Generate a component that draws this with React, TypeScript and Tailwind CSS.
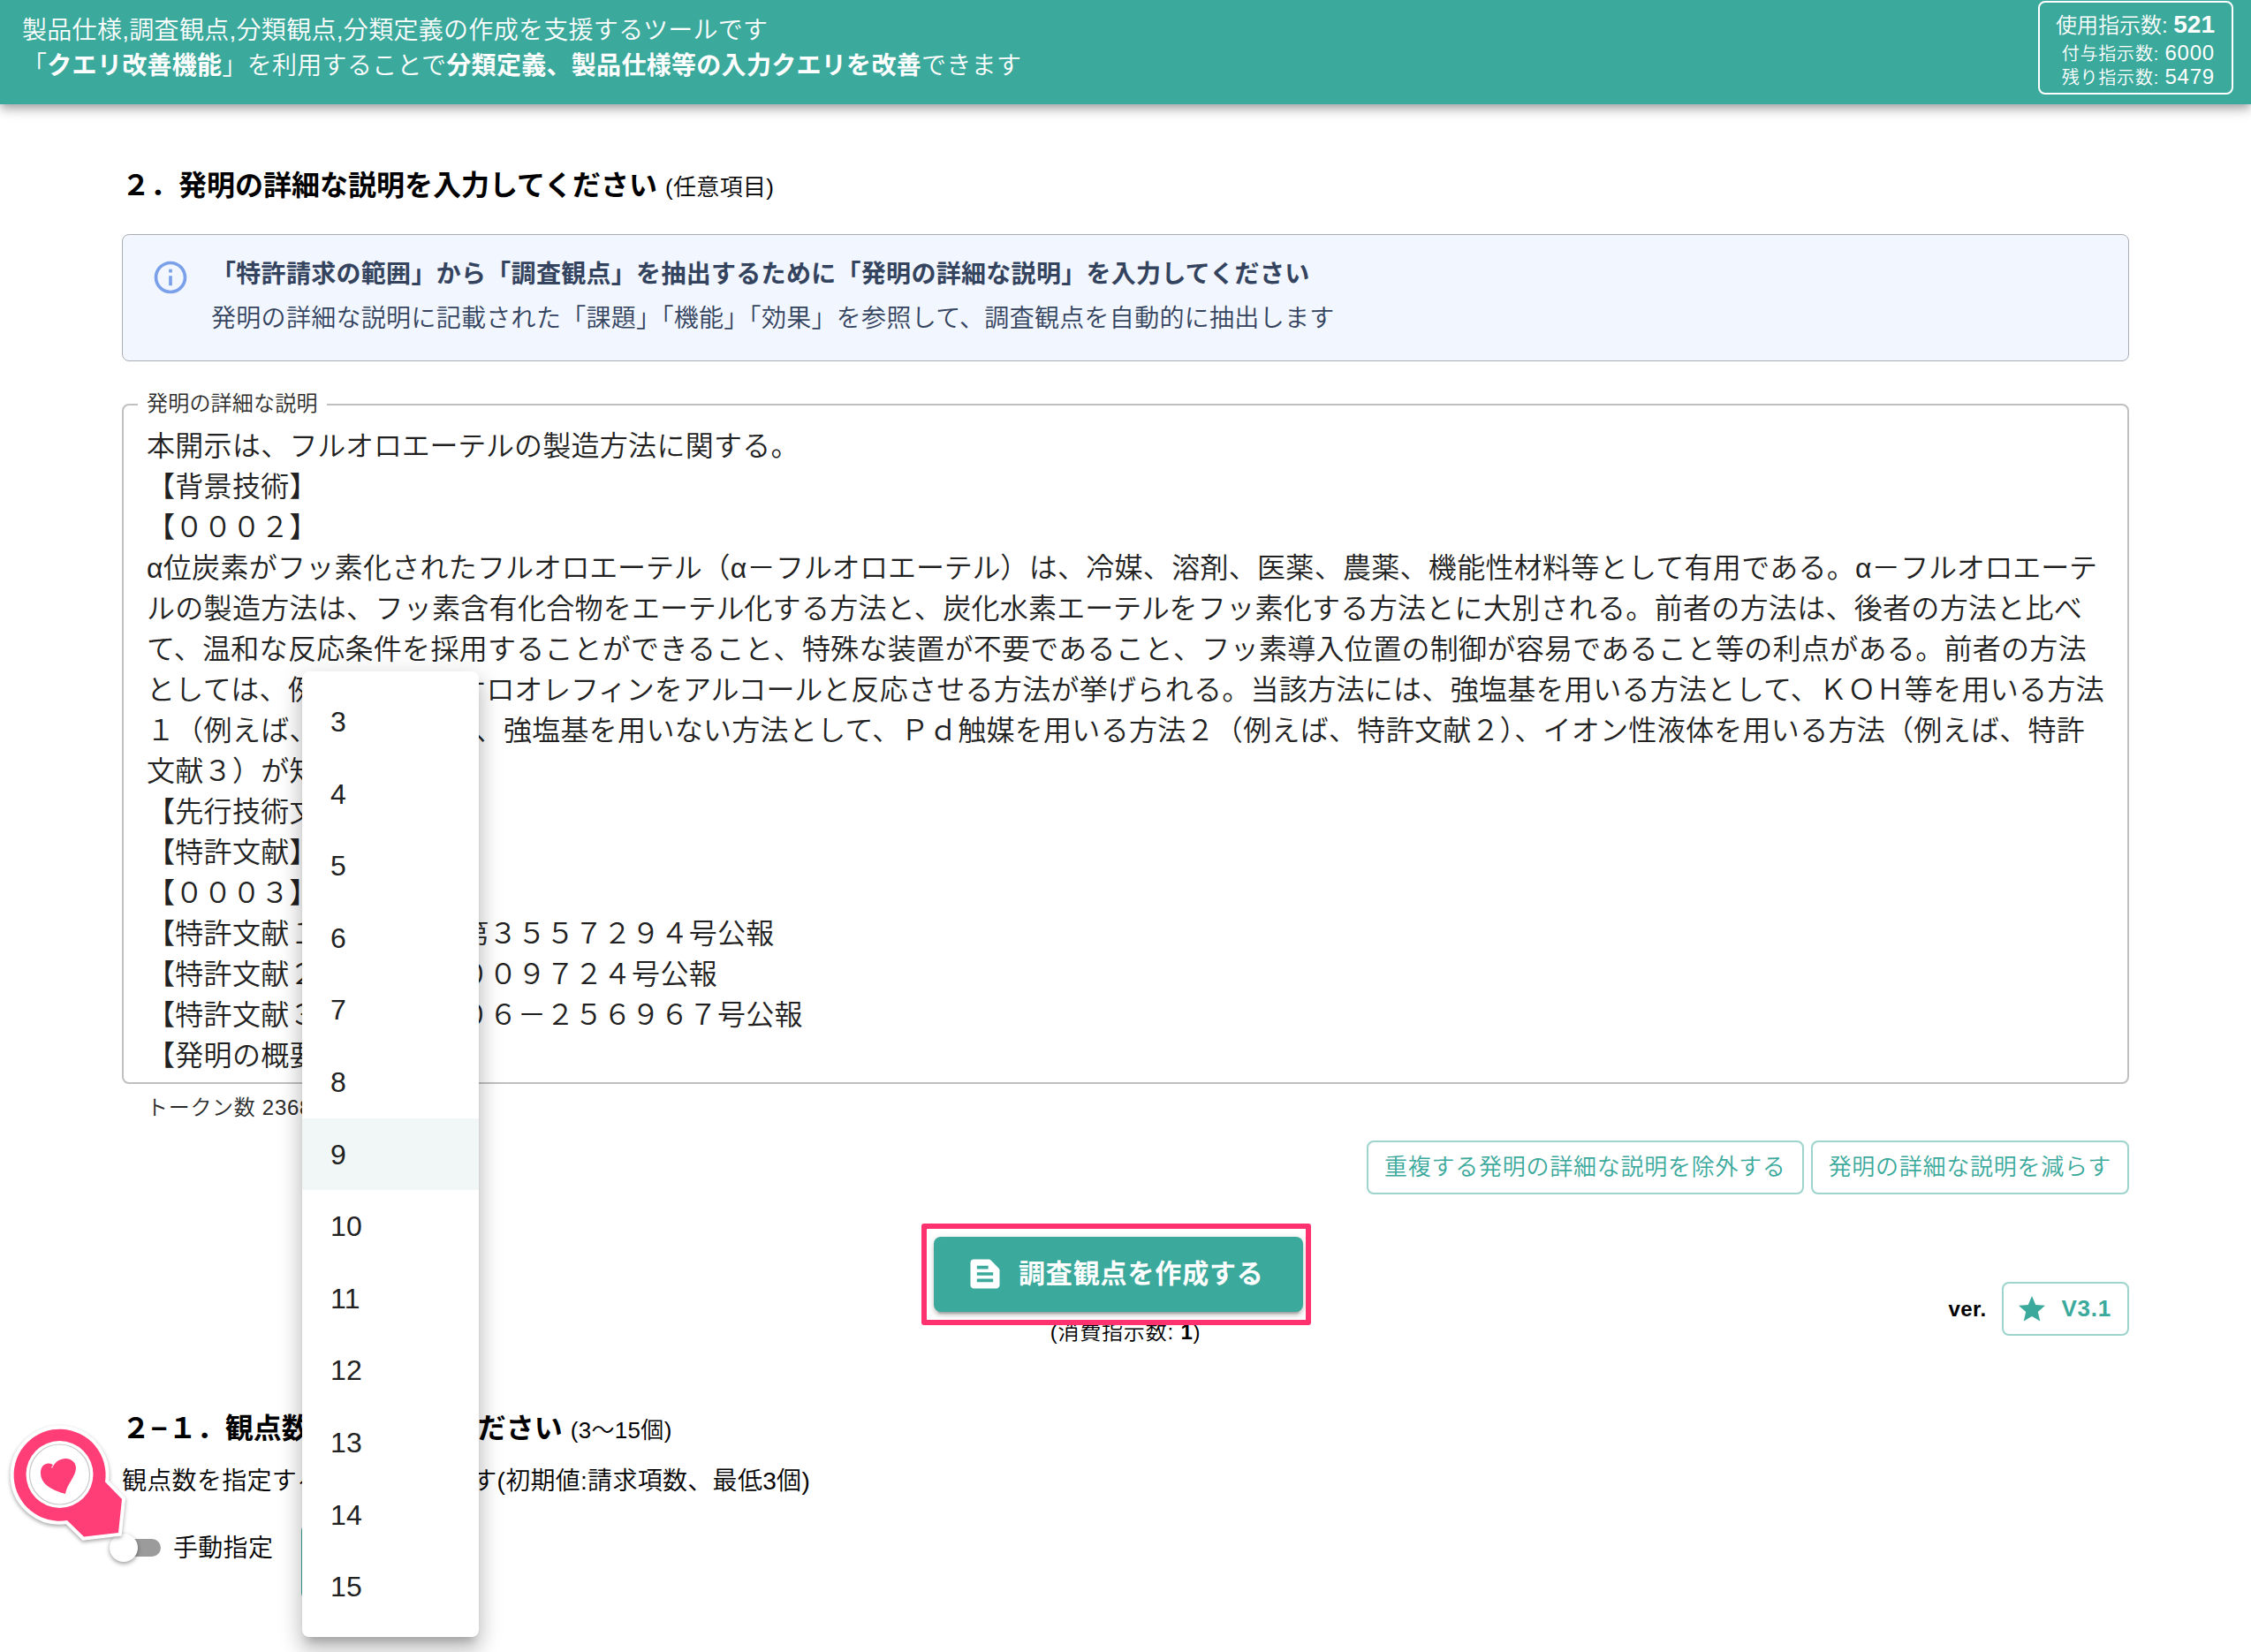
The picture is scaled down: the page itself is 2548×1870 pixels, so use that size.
import React from "react";
import { clsx } from "clsx";

const description = [
  "本開示は、フルオロエーテルの製造方法に関する。",
  "【背景技術】",
  "【０００２】",
  "α位炭素がフッ素化されたフルオロエーテル（α－フルオロエーテル）は、冷媒、溶剤、医薬、農薬、機能性材料等として有用である。α－フルオロエーテ",
  "ルの製造方法は、フッ素含有化合物をエーテル化する方法と、炭化水素エーテルをフッ素化する方法とに大別される。前者の方法は、後者の方法と比べ",
  "て、温和な反応条件を採用することができること、特殊な装置が不要であること、フッ素導入位置の制御が容易であること等の利点がある。前者の方法",
  "としては、例えば、フルオロオレフィンをアルコールと反応させる方法が挙げられる。当該方法には、強塩基を用いる方法として、ＫＯＨ等を用いる方法",
  "１（例えば、特許文献１）、強塩基を用いない方法として、Ｐｄ触媒を用いる方法２（例えば、特許文献２）、イオン性液体を用いる方法（例えば、特許",
  "文献３）が知られている。",
  "【先行技術文献】",
  "【特許文献】",
  "【０００３】",
  "【特許文献１】日本特許第３５５７２９４号公報",
  "【特許文献２】特許第５００９７２４号公報",
  "【特許文献３】特開２００６－２５６９６７号公報",
  "【発明の概要】",
];

const counts = [3, 4, 5, 6, 7, 8, 9, 10, 11, 12, 13, 14, 15];

type IconProps = {
  d: string;
  className?: string;
};

const Icon: React.FC<IconProps> = ({ d, className }) => (
  <svg viewBox="0 0 24 24" fill="currentColor" className={className}>
    <path d={d} />
  </svg>
);

const icons = {
  info: "M11 7h2v2h-2zm0 4h2v6h-2zm1-9C6.48 2 2 6.48 2 12s4.48 10 10 10 10-4.48 10-10S17.52 2 12 2m0 18c-4.41 0-8-3.59-8-8s3.59-8 8-8 8 3.59 8 8-3.59 8-8 8",
  snippet:
    "M20.41 8.41l-4.83-4.83c-.37-.37-.88-.58-1.41-.58H5c-1.1 0-2 .9-2 2v14c0 1.1.9 2 2 2h14c1.1 0 2-.9 2-2V9.83c0-.53-.21-1.04-.59-1.42M7 7h7v2H7zm10 10H7v-2h10zm0-4H7v-2h10z",
  star: "M12 17.27 18.18 21l-1.64-7.03L22 9.24l-7.19-.61L12 2 9.19 8.63 2 9.24l5.46 4.73L5.82 21z",
};

const Header = () => (
  <header className="relative z-10 flex h-[118px] justify-between bg-[#3ba99c] pr-5 pl-[25px] text-white shadow-[0_4px_8px_-2px_rgba(0,0,0,0.2),0_8px_10px_0_rgba(0,0,0,0.14),0_2px_20px_0_rgba(0,0,0,0.12)]">
    <div className="pt-[15px] text-[28px] leading-10 tracking-[0.3px]">
      <p>製品仕様,調査観点,分類観点,分類定義の作成を支援するツールです</p>
      <p>
        「<b>クエリ改善機能</b>」を利用することで
        <b>分類定義、製品仕様等の入力クエリを改善</b>できます
      </p>
    </div>
    <div className="mt-px h-[106px] w-[221px] rounded-lg border-[2.5px] border-white pt-2.5 pr-[19px] text-right">
      <p className="h-[30px] text-[24px] leading-[30px]">
        使用指示数: <b className="text-[28px]">521</b>
      </p>
      <p className="mt-[3px] h-[27px] text-[20px] leading-[27px] tracking-[0.8px]">
        付与指示数: <span className="text-[24px]">6000</span>
      </p>
      <p className="h-[27px] text-[20px] leading-[27px] tracking-[0.8px]">
        残り指示数: <span className="text-[24px]">5479</span>
      </p>
    </div>
  </header>
);

type HeadingProps = {
  title: React.ReactNode;
  note: string;
};

const Heading: React.FC<HeadingProps> = ({ title, note }) => (
  <h2 className="flex h-[60px] items-baseline gap-[9px] leading-[60px] text-black">
    <span className="text-[32px] font-bold">{title}</span>
    <span className="text-[26px] tracking-[0.3px]">{note}</span>
  </h2>
);

// Long katakana words run tighter than the rest, "こと" a little looser
const DescriptionLine: React.FC<{ text: string }> = ({ text }) => (
  <p className="text-[32px] leading-[46px] tracking-[0.3px] text-[#212121]">
    {text.split(/(フルオロ[ァ-ヶー]+|エーテル|アルコール|こと)/).map((part, i) =>
      i % 2 ? (
        <span
          key={i}
          className={part === "こと" ? "tracking-[0.6px]" : "tracking-[-0.2px]"}
        >
          {part}
        </span>
      ) : (
        part
      ),
    )}
  </p>
);

const OutlinedButton: React.FC<{ children: React.ReactNode }> = ({
  children,
}) => (
  <button className="flex h-[61px] items-center rounded-lg border-2 border-[#3ba99c]/50 px-[18px] text-[26px] tracking-[0.74px] text-[#3ba99c]">
    {children}
  </button>
);

const CountMenu = () => (
  <ul className="absolute top-[760px] left-[342px] z-20 w-[200px] rounded-lg bg-white py-4 shadow-[0_10px_10px_-6px_rgba(0,0,0,0.2),0_16px_20px_2px_rgba(0,0,0,0.14),0_6px_28px_4px_rgba(0,0,0,0.12)]">
    {counts.map((count) => (
      <li
        key={count}
        className={clsx(
          "h-[81.6px] px-8 text-[32px] leading-[82.6px] tracking-[0.3px] text-[#212121]",
          count === 9 && "bg-[#f1f7f7]",
        )}
      >
        {count}
      </li>
    ))}
  </ul>
);

const HeartPin = () => (
  <svg
    viewBox="0 0 150 150"
    className="absolute top-[1605px] left-0 z-10 size-[150px] drop-shadow-[0_2px_2px_rgba(0,0,0,0.35)]"
  >
    <g fill="#ff3d77" stroke="#fff" strokeWidth="8" paintOrder="stroke">
      <path d="M119 72.5L138 92L134 130L95 134.5L76 116A52 52 0 1 1 119 72.5Z" />
    </g>
    <circle cx="67.5" cy="64" r="38" fill="#fff" />
    <circle
      cx="67.5"
      cy="64"
      r="34"
      fill="#fff"
      stroke="#c9c9c9"
      strokeWidth="1.2"
    />
    <path
      fill="#ff3d77"
      d="M59 57L58 55.500C60 55 60.500 53.500 58 52C53 50 46 53 46 62C46 76 60 82 74 86C76 74 85 68 86 57C86 44 66 41 59 57Z"
    />
  </svg>
);

const App = () => {
  return (
    <div className="relative h-[1870px] w-[2548px] overflow-hidden bg-white font-['Liberation_Sans','Noto_Sans_CJK_JP',sans-serif] font-[350] whitespace-nowrap">
      <Header />

      <main className="px-[138px] pt-[62px]">
        <Heading
          title="２．発明の詳細な説明を入力してください"
          note="(任意項目)"
        />

        {/* Info */}
        <div className="mt-[25px] flex h-[144px] rounded-lg border-[1.5px] border-[#a9adb5] bg-[#f1f6ff] text-[28px] leading-[50px] tracking-[0.3px] text-[#34435e]">
          <Icon
            d={icons.info}
            className="mt-[26px] mr-6 ml-8 size-11 text-[#7aa0ea]"
          />
          <div className="pt-5">
            <p className="font-bold">
              「特許請求の範囲」から「調査観点」を抽出するために「発明の詳細な説明」を入力してください
            </p>
            <p>
              発明の詳細な説明に記載された「課題」「機能」「効果」を参照して、調査観点を自動的に抽出します
            </p>
          </div>
        </div>

        {/* Description */}
        <div className="relative mt-12 h-[770px] rounded-lg border-2 border-[#c0c0c0] px-[26px] pt-[23px]">
          <span className="absolute -top-5 left-4 bg-white px-2.5 text-[24px] leading-9 tracking-[0.2px] text-[#2b2b2b]">
            発明の詳細な説明
          </span>
          {description.map((line) => (
            <DescriptionLine key={line} text={line} />
          ))}
        </div>
        <p className="mt-[9px] px-7 text-[24px] leading-9 tracking-[0.7px] text-[#2b2b2b]">
          トークン数 2368
        </p>

        <div className="mt-[19px] flex justify-end gap-2">
          <OutlinedButton>重複する発明の詳細な説明を除外する</OutlinedButton>
          <OutlinedButton>発明の詳細な説明を減らす</OutlinedButton>
        </div>

        {/* Submit */}
        <div className="mt-12 grid h-[134px] grid-cols-3">
          <div className="col-start-2 flex flex-col items-center">
            <div className="relative -left-2">
              <div className="absolute -top-[15px] -right-[9px] -bottom-[15px] -left-[14px] z-10 rounded-[3px] border-[6px] border-[#ff3270]" />
              <button className="flex h-[85px] w-[418px] items-center rounded-lg bg-[#3ba99c] pb-0.5 pl-9 text-[30px] font-bold tracking-[0.86px] text-white shadow-[0_6px_2px_-4px_rgba(0,0,0,0.2),0_4px_4px_0_rgba(0,0,0,0.14),0_2px_10px_0_rgba(0,0,0,0.12)]">
                <Icon d={icons.snippet} className="mr-4 size-11" />
                調査観点を作成する
              </button>
            </div>
            <p className="mt-1.5 text-[24px] leading-[34px] tracking-[0.8px] text-black">
              (消費指示数: <b>1</b>)
            </p>
          </div>
          <div className="mt-[51px] flex h-[61px] items-center justify-end gap-[17px]">
            <b className="text-[24px] tracking-[0.4px]">ver.</b>
            <OutlinedButton>
              <Icon d={icons.star} className="mr-4 -ml-1 size-9" />
              <b>V3.1</b>
            </OutlinedButton>
          </div>
        </div>

        {/* Counts */}
        <div className="mt-[53px]">
          <Heading
            title={
              <>
                ２<span className="px-px">−</span>１．観点数を指定してください
              </>
            }
            note="(3〜15個)"
          />
        </div>
        <p className="mt-[10px] text-[28px] leading-10 tracking-[0.3px] text-black">
          観点数を指定することができます(初期値:請求項数、最低3個)
        </p>
        <div className="mt-[28px] flex h-[86px] items-center">
          <div className="-mt-8 -ml-2 flex h-5 w-[52px] items-center rounded-full bg-[#9b9b9b]">
            <span className="-ml-1.5 size-8 shrink-0 rounded-full bg-white shadow-[0_2px_5px_rgba(0,0,0,0.4)]" />
          </div>
          <span className="-mt-[30px] ml-[14px] text-[28px] tracking-[0.3px] text-black">
            手動指定
          </span>
          <div className="ml-8 h-[86px] w-[180px] rounded-lg border-2 border-[#3ba99c]" />
        </div>
      </main>

      <HeartPin />
      <CountMenu />
    </div>
  );
};

export default App;
